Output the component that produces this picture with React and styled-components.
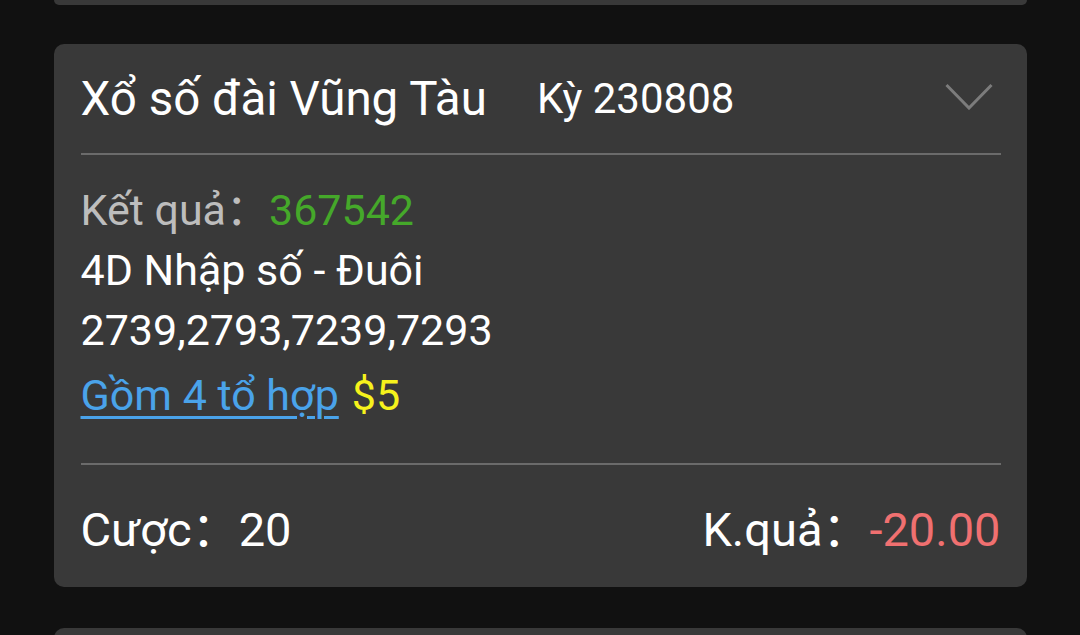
import React from "react";
import styled, { createGlobalStyle } from "styled-components";

const Global = createGlobalStyle`
  html, body { margin: 0; padding: 0; background: #111111; }
  body { font-family: Roboto, "Noto Sans CJK SC", sans-serif; }
`;

const Page = styled.div`
  width: 1080px;
  height: 635px;
  overflow: hidden;
  background: #111111;
  display: flex;
  flex-direction: column;
  align-items: center;
`;

const CardBase = styled.div`
  width: 973px;
  background: #393939;
  flex-shrink: 0;
`;

const PrevCard = styled(CardBase)`
  height: 5px;
  border-radius: 0 0 10px 10px;
  margin-bottom: 39px;
`;

const NextCard = styled(CardBase)`
  height: 20px;
  border-radius: 10px 10px 0 0;
  margin-top: 41px;
`;

const Card = styled(CardBase)`
  border-radius: 10px;
  padding: 0 26px 0 27px;
  box-sizing: border-box;
  display: flex;
  flex-direction: column;
`;

const Header = styled.div`
  height: 109px;
  display: flex;
  align-items: center;
  color: #ffffff;
  font-size: 47.5px;
  white-space: nowrap;
`;

const Title = styled.span`
  margin-right: 50px;
`;

const Period = styled.span`
  font-size: 42px;
  flex: 1;
`;

const Chevron = styled.svg`
  width: 48px;
  height: 27px;
  margin-right: 8px;
  margin-top: -5px;
`;

const Divider = styled.div`
  height: 2px;
  background: #6b6b6b;
`;

const Body = styled.div`
  padding: 25px 0 33px;
  display: flex;
  flex-direction: column;
  font-size: 43px;
  color: #ffffff;
`;

const Line = styled.div`
  height: ${(p) => p.$h || 60}px;
  line-height: ${(p) => p.$h || 60}px;
  white-space: nowrap;
`;

const Muted = styled.span`
  color: #bdbdbd;
`;

const Tone = styled.span`
  color: ${(p) => p.$c};
`;

const Link = styled.a`
  color: #4aa3ea;
  text-decoration: underline;
  text-decoration-thickness: 3px;
  text-underline-offset: 6px;
  margin-right: 13px;
`;

const Footer = styled.div`
  height: 122px;
  box-sizing: border-box;
  padding-bottom: 2px;
  display: flex;
  align-items: center;
  justify-content: space-between;
  font-size: 47px;
  color: #ffffff;
  white-space: nowrap;
`;

export default function App() {
  return (
    <>
      <Global />
      <Page>
        <PrevCard />
        <Card>
          <Header>
            <Title>Xổ số đài Vũng Tàu</Title>
            <Period>Kỳ 230808</Period>
            <Chevron viewBox="0 0 48 27">
              <polyline points="1.5,2 24,25 46.5,2" fill="none" stroke="#7c7c7c" strokeWidth="3" />
            </Chevron>
          </Header>
          <Divider />
          <Body>
            <Line>
              <Muted>Kết quả：</Muted>
              <Tone $c="#45a82a">367542</Tone>
            </Line>
            <Line>4D Nhập số - Đuôi</Line>
            <Line>2739,2793,7239,7293</Line>
            <Line $h={70}>
              <Link>Gồm 4 tổ hợp</Link>
              <Tone $c="#f6f21c">$5</Tone>
            </Line>
          </Body>
          <Divider />
          <Footer>
            <span>Cược：20</span>
            <span>
              K.quả：<Tone $c="#f07070">-20.00</Tone>
            </span>
          </Footer>
        </Card>
        <NextCard />
      </Page>
    </>
  );
}
